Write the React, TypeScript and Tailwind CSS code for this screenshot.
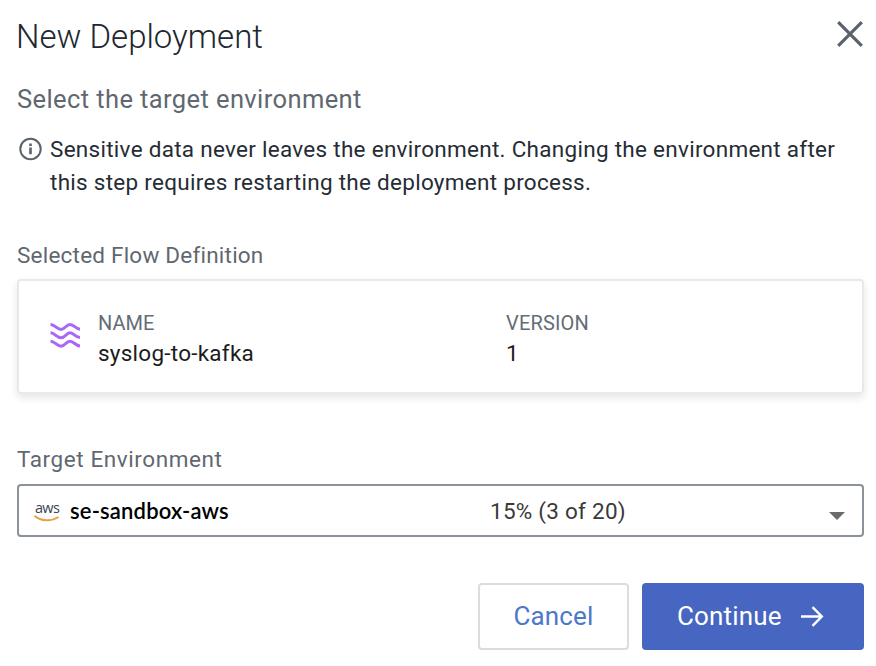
import React from "react";

function CloseIcon() {
  return (
    <svg width="28" height="28" viewBox="0 0 28 28" fill="none" stroke="#5a636c" strokeWidth="3.2">
      <path d="M2.2 2.2 25.8 25.8M25.8 2.2 2.2 25.8" />
    </svg>
  );
}

function InfoIcon() {
  return (
    <svg width="24" height="24" viewBox="0 0 24 24" fill="none" stroke="#5a636c">
      <circle cx="11.5" cy="12" r="10.2" strokeWidth="2" />
      <path d="M11.5 10.6v6.6M11.5 6.6v2.4" strokeWidth="2.6" />
    </svg>
  );
}

function FlowIcon() {
  return (
    <svg width="32" height="28" viewBox="0 0 32 28" fill="none" stroke="#ab66f6" strokeWidth="3">
      <path d="M0.5 2.4C5 2.4 6.5 7.4 11 7.4S16 2.4 20 2.4 25.5 7.2 30 7.2" />
      <path d="M0.5 10.8C5 10.8 6.5 15.8 11 15.8S16 10.8 20 10.8 25.5 15.6 30 15.6" />
      <path d="M0.5 19.2C5 19.2 6.5 24.2 11 24.2S16 19.2 20 19.2 25.5 24 30 24" />
    </svg>
  );
}

function AwsLogo() {
  return (
    <span className="flex w-[26px] shrink-0 flex-col pt-[2px]">
      <span className="h-[14px] whitespace-nowrap pl-px font-['Open_Sans',sans-serif] text-[14.5px] leading-[14px] tracking-[-0.7px] text-[#3b4354]">
        aws
      </span>
      <svg width="26" height="7" viewBox="0 0 26 7" fill="none" stroke="#e5a43c" strokeWidth="2">
        <path d="M0.5 0.8C7 6.3 17 6.8 24.5 2" />
      </svg>
    </span>
  );
}

function ArrowIcon() {
  return (
    <svg width="24" height="22" viewBox="0 0 24 22" fill="none" stroke="white" strokeWidth="2.4">
      <path d="M0 10.5H20.5M11.5 1.2 20.8 10.5 11.5 19.8" />
    </svg>
  );
}

export default function App() {
  return (
    <div className="flex h-[666px] w-[876px] flex-col overflow-hidden bg-white pl-[17px] pr-[12px] pt-[17px] font-['Roboto',sans-serif] text-[22.5px] text-[#252c35]">
      <header className="flex h-10 items-start justify-between">
        <h1 className="-ml-px text-[33px] font-light leading-10 text-[#20272f]">New Deployment</h1>
        <button aria-label="Close" className="mt-[3px]"><CloseIcon /></button>
      </header>
      <h2 className="mt-[22px] h-10 text-[25.5px] leading-10 tracking-[0.4px] text-[#5f6871]">
        Select the target environment
      </h2>
      <div className="mt-[14px] flex h-[66px] items-start gap-[7px] pl-[2px]">
        <span className="mt-1 shrink-0"><InfoIcon /></span>
        <p className="whitespace-nowrap leading-[33px] tracking-[0.28px]">
          Sensitive data never leaves the environment. Changing the environment after
          <br />
          this step requires restarting the deployment process.
        </p>
      </div>
      <h3 className="mt-[40px] h-8 leading-8 tracking-[0.22px] text-[#5f6871]">Selected Flow Definition</h3>
      <section className="mt-[8px] flex h-[115px] shrink-0 rounded-[4px] border-2 border-[#e9e9e9] pl-[31px] pt-[28px] shadow-[0_4px_8px_rgba(0,0,0,0.1)]">
        <div className="mt-[13px] w-[48px]"><FlowIcon /></div>
        <div className="w-[408px]">
          <div className="h-[28px] text-[20px] leading-[29px] text-[#646d76]">NAME</div>
          <div className="h-8 leading-8 tracking-[0.25px] text-[#1c1c1c]">syslog-to-kafka</div>
        </div>
        <div>
          <div className="h-[28px] text-[20px] leading-[29px] tracking-[0.15px] text-[#646d76]">VERSION</div>
          <div className="h-8 leading-8 text-[#1c1c1c]">1</div>
        </div>
      </section>
      <h3 className="mt-[49px] h-8 leading-8 tracking-[0.58px] text-[#5f6871]">Target Environment</h3>
      <div className="mt-[9px] flex h-[53px] shrink-0 items-center rounded-[4px] border-2 border-[#8c9299] pl-[15px] pr-[17px]">
        <AwsLogo />
        <span className="ml-[10px] w-[420px] font-['Lato',sans-serif] text-[22px] font-semibold tracking-[0.18px] text-black">
          se-sandbox-aws
        </span>
        <span className="pt-[2px] tracking-[0.25px] text-[#3a3a3a]">15% (3 of 20)</span>
        <span className="ml-auto mt-[10px] h-0 w-0 border-x-[8px] border-t-[8px] border-x-transparent border-t-[#6b6b6b]" />
      </div>
      <footer className="mt-[46px] flex h-[67px] shrink-0 justify-end gap-[13px] text-[26px]">
        <button className="h-[67px] w-[151px] rounded-[4px] border-2 border-[#dcdcde] tracking-[0.15px] text-[#4c78cb]">Cancel</button>
        <button className="flex h-[67px] w-[222px] items-center rounded-[4px] bg-[#4766c1] pl-[35px] text-white">
          <span className="w-[124px] text-left tracking-[0.15px]">Continue</span>
          <ArrowIcon />
        </button>
      </footer>
    </div>
  );
}
